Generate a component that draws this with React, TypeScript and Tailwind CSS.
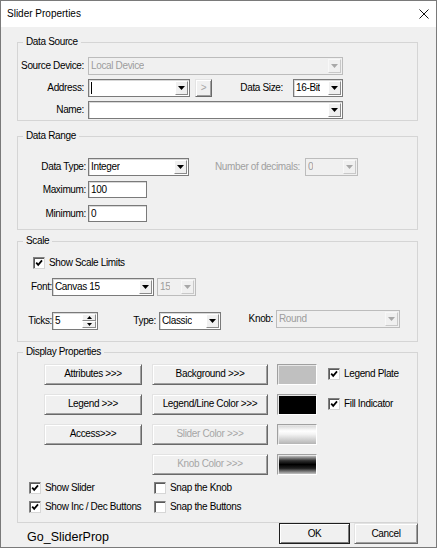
import React from "react";

function Tri({ up = false, color = "#000", w = 7, h = 4 }: { up?: boolean; color?: string; w?: number; h?: number }) {
  return (
    <svg width={w} height={h} viewBox={`0 0 ${w} ${h}`} className="block">
      {up ? <path d={`M0 ${h}H${w}L${w / 2} 0Z`} fill={color} /> : <path d={`M0 0H${w}L${w / 2} ${h}Z`} fill={color} />}
    </svg>
  );
}

function Combo({ cls = "", text = "", disabled = false, caret = false }: { cls?: string; text?: string; disabled?: boolean; caret?: boolean }) {
  return (
    <div
      className={
        "flex shrink-0 border p-[1px] " +
        (disabled ? "border-[#bcbcbc] bg-[#f0f0f0] text-[#9d9d9d] " : "border-[#7a7a7a] bg-white text-black shadow-[inset_1px_1px_0_#d8d8d8] ") +
        cls
      }
    >
      <div className="flex min-w-0 flex-1 items-center pl-[1px]">
        {caret && <span className="h-[12px] w-px bg-black" />}
        <span className="truncate">{text}</span>
      </div>
      <div
        className={
          "flex w-[13px] shrink-0 items-center justify-center border " +
          (disabled
            ? "border-t-[#f8f8f8] border-l-[#f8f8f8] border-r-[#c8c8c8] border-b-[#c8c8c8] bg-[#f0f0f0]"
            : "border-t-white border-l-white border-r-[#8a8a8a] border-b-[#8a8a8a] bg-[#f0f0f0]")
        }
      >
        <Tri color={disabled ? "#a8a8a8" : "#000"} />
      </div>
    </div>
  );
}

function Input({ cls = "", text = "" }: { cls?: string; text?: string }) {
  return (
    <div className={"flex shrink-0 items-center border border-[#7a7a7a] bg-white pl-[2px] shadow-[inset_1px_1px_0_#d8d8d8] " + cls}>
      {text}
    </div>
  );
}

function Btn({ cls = "", children, disabled = false, def = false }: { cls?: string; children: React.ReactNode; disabled?: boolean; def?: boolean }) {
  return (
    <div
      className={
        "flex shrink-0 items-center justify-center border bg-[#f0f0f0] " +
        (def
          ? "border-[#1e1e1e] shadow-[inset_1px_1px_0_#ffffff,inset_-1px_-1px_0_#7a7a7a] "
          : "border-t-[#e3e3e3] border-l-[#e3e3e3] border-r-[#696969] border-b-[#696969] shadow-[inset_1px_1px_0_#ffffff,inset_-1px_-1px_0_#a0a0a0] ") +
        (disabled ? "text-[#a6a6a6] " : "text-black ") +
        cls
      }
    >
      {children}
    </div>
  );
}

function Check({ checked = false, cls = "" }: { checked?: boolean; cls?: string }) {
  return (
    <div
      className={
        "flex h-[12px] w-[12px] shrink-0 items-center justify-center border border-t-[#808080] border-l-[#808080] border-r-[#d6d6d6] border-b-[#d6d6d6] bg-white shadow-[inset_1px_1px_0_#5a5a5a] " +
        cls
      }
    >
      {checked && (
        <svg width="10" height="10" viewBox="0 0 10 10" className="block">
          <path d="M2.2 4.6 L4.2 6.8 L8 2.4" stroke="#000" strokeWidth="1.8" fill="none" />
        </svg>
      )}
    </div>
  );
}

function Swatch({ cls = "" }: { cls?: string }) {
  return (
    <div
      className={
        "h-[21px] w-[40px] shrink-0 border border-t-[#a0a0a0] border-l-[#a0a0a0] border-r-white border-b-white shadow-[inset_1px_1px_0_#e6e6e6] " +
        cls
      }
    />
  );
}

function Label({ children, cls = "pr-[4px]" }: { children: React.ReactNode; cls?: string }) {
  return <span className={"w-[70px] shrink-0 text-right " + cls}>{children}</span>;
}

function Group({ title, cls = "", children }: { title: string; cls?: string; children: React.ReactNode }) {
  return (
    <div className={"relative w-[401px] shrink-0 border border-[#d5d5d5] " + cls}>
      <span className="absolute left-[5px] top-[-7px] bg-[#f0f0f0] px-[3px] leading-[12px]">{title}</span>
      {children}
    </div>
  );
}

export default function App() {
  return (
    <div className="h-[556px] w-[437px] bg-white font-['Liberation_Sans',Arial,sans-serif] text-[10px] leading-[12px] tracking-[-0.35px] text-black">
      <div className="flex h-[548px] w-[437px] flex-col border border-[#7a7a7a] bg-[#f0f0f0]">
        {/* Title bar */}
        <div className="flex h-[26px] shrink-0 items-center justify-between bg-white pl-[6px] pr-[7px]">
          <span className="tracking-normal">Slider Properties</span>
          <svg width="10" height="10" viewBox="0 0 10 10" className="block">
            <path d="M0.5 0.5 L9.5 9.5 M9.5 0.5 L0.5 9.5" stroke="#111" strokeWidth="1" />
          </svg>
        </div>

        <div className="flex flex-col pl-[16px] pt-[15px]">
          {/* Data Source */}
          <Group title="Data Source" cls="pt-[14px] pb-[1px]">
            <div className="flex flex-col gap-[4px]">
              <div className="flex h-[18px] items-center">
                <Label>Source Device:</Label>
                <Combo cls="h-[18px] w-[255px]" text="Local Device" disabled />
              </div>
              <div className="flex h-[18px] items-center">
                <Label>Address:</Label>
                <Combo cls="h-[18px] w-[102px]" caret />
                <Btn cls="ml-[5px] h-[18px] w-[17px]" disabled>
                  {">"}
                </Btn>
                <span className="w-[71px] shrink-0 text-right">Data Size:</span>
                <Combo cls="ml-[10px] h-[18px] w-[50px]" text="16-Bit" />
              </div>
              <div className="flex h-[18px] items-center">
                <Label>Name:</Label>
                <Combo cls="h-[18px] w-[255px]" />
              </div>
            </div>
          </Group>

          {/* Data Range */}
          <Group title="Data Range" cls="mt-[15px] pt-[21px] pb-[7px]">
            <div className="flex h-[18px] items-center">
              <Label cls="pr-[2px]">Data Type:</Label>
              <Combo cls="h-[18px] w-[101px]" text="Integer" />
              <span className="w-[111px] shrink-0 text-right text-[#a0a0a0]">Number of decimals:</span>
              <Combo cls="ml-[5px] h-[18px] w-[53px]" text="0" disabled />
            </div>
            <div className="mt-[5px] flex h-[17px] items-center">
              <Label cls="pr-[2px]">Maximum:</Label>
              <Input cls="h-[17px] w-[59px]" text="100" />
            </div>
            <div className="mt-[7px] flex h-[17px] items-center">
              <Label cls="pr-[2px]">Minimum:</Label>
              <Input cls="h-[17px] w-[59px]" text="0" />
            </div>
          </Group>

          {/* Scale */}
          <Group title="Scale" cls="mt-[11px] pt-[14px] pb-[11px]">
            <div className="flex h-[14px] items-center pl-[15px]">
              <Check checked />
              <span className="ml-[4px]">Show Scale Limits</span>
            </div>
            <div className="mt-[8px] flex h-[18px] items-center">
              <span className="w-[34px] shrink-0 text-right">Font:</span>
              <Combo cls="h-[18px] w-[102px]" text="Canvas 15" />
              <Combo cls="ml-[3px] h-[18px] w-[39px]" text="15" disabled />
            </div>
            <div className="mt-[14px] flex h-[20px]">
              <span className="w-[34px] shrink-0 self-end text-right leading-[18px]">Ticks:</span>
              <div className="flex h-[18px] w-[46px] shrink-0 self-end border border-[#7a7a7a] bg-white p-[1px] shadow-[inset_1px_1px_0_#d8d8d8]">
                <span className="flex-1 pl-[1px] leading-[14px]">5</span>
                <div className="flex w-[14px] flex-col">
                  <div className="flex flex-1 items-center justify-center border border-t-white border-l-white border-r-[#8a8a8a] border-b-[#8a8a8a] bg-[#f0f0f0]">
                    <Tri up w={5} h={3} />
                  </div>
                  <div className="flex flex-1 items-center justify-center border border-t-white border-l-white border-r-[#8a8a8a] border-b-[#8a8a8a] bg-[#f0f0f0]">
                    <Tri w={5} h={3} />
                  </div>
                </div>
              </div>
              <span className="w-[58px] shrink-0 self-end text-right leading-[18px]">Type:</span>
              <Combo cls="ml-[3px] h-[18px] w-[62px] self-end" text="Classic" />
              <span className="w-[52px] shrink-0 self-start text-right leading-[18px]">Knob:</span>
              <Combo cls="ml-[3px] h-[18px] w-[124px] self-start" text="Round" disabled />
            </div>
          </Group>

          {/* Display Properties */}
          <Group title="Display Properties" cls="mt-[10px] pt-[10px] pb-[8px]">
            <div className="flex h-[22px] items-center pl-[26px]">
              <Btn cls="h-[21px] w-[98px]">{"Attributes >>>"}</Btn>
              <Btn cls="ml-[10px] h-[21px] w-[116px]">{"Background >>>"}</Btn>
              <Swatch cls="ml-[9px] bg-[#c0c0c0]" />
              <Check checked cls="ml-[11px]" />
              <span className="ml-[4px]">Legend Plate</span>
            </div>
            <div className="mt-[8px] flex h-[22px] items-center pl-[26px]">
              <Btn cls="h-[21px] w-[98px]">{"Legend >>>"}</Btn>
              <Btn cls="ml-[10px] h-[21px] w-[116px]">{"Legend/Line Color >>>"}</Btn>
              <Swatch cls="ml-[9px] bg-black" />
              <Check checked cls="ml-[11px]" />
              <span className="ml-[4px]">Fill Indicator</span>
            </div>
            <div className="mt-[8px] flex h-[22px] items-center pl-[26px]">
              <Btn cls="h-[21px] w-[98px]">{"Access>>>"}</Btn>
              <Btn cls="ml-[10px] h-[21px] w-[116px]" disabled>
                {"Slider Color >>>"}
              </Btn>
              <Swatch cls="ml-[9px] bg-[linear-gradient(to_bottom,#d4d4d4,#ffffff_32%,#f2f2f2_50%,#b4b4b4_100%)]" />
            </div>
            <div className="mt-[8px] flex h-[22px] items-center pl-[134px]">
              <Btn cls="h-[21px] w-[116px]" disabled>
                {"Knob Color >>>"}
              </Btn>
              <Swatch cls="ml-[9px] bg-[linear-gradient(to_bottom,#d8d8d8,#303030_30%,#000000_50%,#202020_70%,#c4c4c4_100%)]" />
            </div>
            <div className="mt-[6px] flex h-[14px] items-center pl-[11px]">
              <div className="flex w-[125px] shrink-0 items-center">
                <Check checked />
                <span className="ml-[4px]">Show Slider</span>
              </div>
              <Check />
              <span className="ml-[4px]">Snap the Knob</span>
            </div>
            <div className="mt-[5px] flex h-[14px] items-center pl-[11px]">
              <div className="flex w-[125px] shrink-0 items-center">
                <Check checked />
                <span className="ml-[4px] whitespace-nowrap">Show Inc / Dec Buttons</span>
              </div>
              <Check />
              <span className="ml-[4px]">Snap the Buttons</span>
            </div>
          </Group>

          {/* Footer */}
          <div className="flex h-[24px] w-[401px] items-start">
            <span className="ml-[10px] mt-[7px] text-[12.5px] leading-[15px] tracking-normal">Go_SliderProp</span>
            <Btn cls="ml-auto h-[21px] w-[71px]" def>
              OK
            </Btn>
            <Btn cls="ml-[4px] h-[21px] w-[64px]">Cancel</Btn>
          </div>
        </div>
      </div>
    </div>
  );
}
